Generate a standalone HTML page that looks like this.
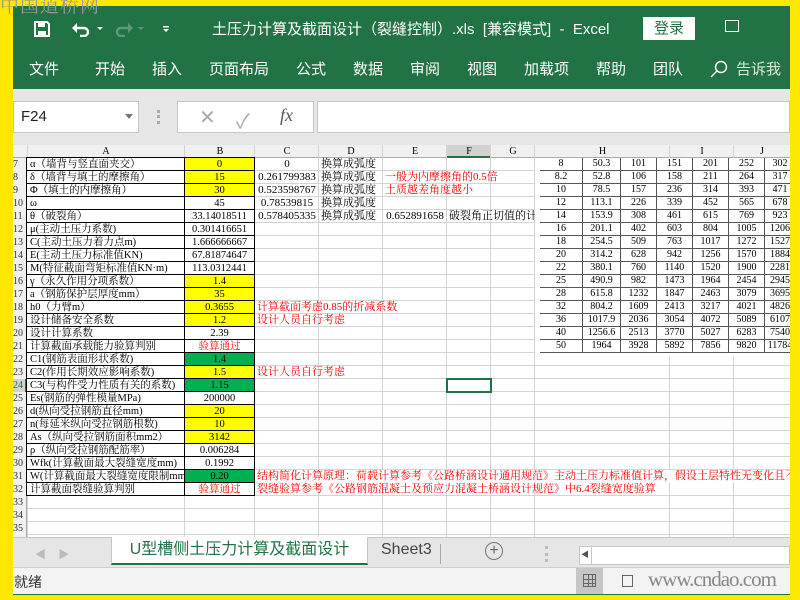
<!DOCTYPE html>
<html><head><meta charset="utf-8"><style>
*{margin:0;padding:0;box-sizing:border-box}
body{width:800px;height:600px;overflow:hidden;background:#ffe800;position:relative;font-family:"Liberation Sans","Noto Sans CJK SC",sans-serif}
.abs{position:absolute}
#app{position:absolute;left:13px;top:6px;width:777px;height:589px;background:#fff;overflow:hidden}
.g{font-family:"Liberation Serif","Noto Serif CJK SC",serif;font-size:11px;line-height:13px;color:#000;white-space:nowrap}
.c{position:absolute;height:13px;overflow:visible}
.ctr{text-align:center}
.bx{border:1px solid #000;margin-left:-1px;margin-top:-1px;height:14px;overflow:hidden}
.y{background:#ffff00}.gr{background:#00b050}.r{color:#ff0000}
</style></head><body>
<div class="abs g" style="left:0;top:-2px;font-size:19px;color:#9a9a9a;letter-spacing:1px;z-index:5;font-family:'Noto Serif CJK SC',serif">中国道桥网</div>
<div id="app">
<div class="abs" style="left:0;top:0;width:777px;height:83px;background:#217346"></div>
<svg class="abs" style="left:21px;top:15px" width="16" height="16" viewBox="0 0 16 16"><path d="M1 1h12l2 2v12H1z" fill="none" stroke="#fff" stroke-width="2"/><rect x="4" y="2" width="7" height="4" fill="#fff"/><rect x="4" y="10" width="8" height="4" fill="#fff"/></svg>
<svg class="abs" style="left:58px;top:15px" width="40" height="16" viewBox="0 0 40 16"><path d="M4 7h9a4 4 0 0 1 0 8H9" fill="none" stroke="#fff" stroke-width="2.4"/><path d="M1 7l5-5v10z" fill="#fff"/><path d="M26 6l3 3 3-3z" fill="#fff"/></svg>
<svg class="abs" style="left:103px;top:15px" width="40" height="16" viewBox="0 0 40 16"><path d="M14 7H5a4 4 0 0 0 0 8h4" fill="none" stroke="#5f9a78" stroke-width="2.4"/><path d="M17 7l-5-5v10z" fill="#5f9a78"/><path d="M22 6l3 3 3-3z" fill="#5f9a78"/></svg>
<svg class="abs" style="left:149px;top:20px" width="8" height="8"><rect x="1" y="0" width="6" height="1.5" fill="#fff"/><path d="M1 3h6l-3 3z" fill="#fff"/></svg>
<div class="abs" style="left:199px;top:12px;color:#fff;font-size:15px;white-space:nowrap">土压力计算及截面设计（裂缝控制）.xls&nbsp;&nbsp;[兼容模式]&nbsp;&nbsp;-&nbsp;&nbsp;Excel</div>
<div class="abs" style="left:630px;top:11px;width:52px;height:23px;background:#fff;color:#217346;font-size:15px;text-align:center;line-height:23px">登录</div>
<div class="abs" style="left:712px;top:14px;width:14px;height:12px;border:1.5px solid #fff"></div>
<div class="abs" style="left:0;top:52px;color:#fff;font-size:15px;white-space:nowrap;width:777px;height:24px">
<span class="abs" style="left:16px">文件</span><span class="abs" style="left:82px">开始</span><span class="abs" style="left:139px">插入</span><span class="abs" style="left:196px">页面布局</span><span class="abs" style="left:283px">公式</span><span class="abs" style="left:340px">数据</span><span class="abs" style="left:397px">审阅</span><span class="abs" style="left:454px">视图</span><span class="abs" style="left:511px">加载项</span><span class="abs" style="left:583px">帮助</span><span class="abs" style="left:640px">团队</span><span class="abs" style="left:723px;color:#d8e8dd">告诉我</span></div>
<svg class="abs" style="left:697px;top:54px" width="18" height="18"><circle cx="11" cy="7" r="5.5" fill="none" stroke="#fff" stroke-width="1.5"/><path d="M7 11l-6 6" stroke="#fff" stroke-width="1.5"/></svg>
<div class="abs" style="left:0;top:83px;width:777px;height:56px;background:#e6e6e6"></div>
<div class="abs" style="left:0;top:95px;width:126px;height:32px;background:#fff;border:1px solid #c6c6c6;font-size:15px;line-height:30px;padding-left:7px;color:#222">F24</div>
<svg class="abs" style="left:112px;top:108px" width="8" height="6"><path d="M0 0h8l-4 5z" fill="#777"/></svg>
<div class="abs" style="left:144px;top:104px;width:3px;height:14px;border-left:3px dotted #aaa"></div>
<div class="abs" style="left:164px;top:95px;width:137px;height:32px;background:#fff;border:1px solid #c6c6c6"></div>
<div class="abs" style="left:186px;top:99px;font-size:20px;color:#aaa">✕</div>
<div class="abs" style="left:223px;top:99px;font-size:20px;color:#aaa">✓</div>
<div class="abs" style="left:267px;top:99px;font-size:18px;color:#555;font-style:italic;font-family:'Liberation Serif',serif">fx</div>
<div class="abs" style="left:304px;top:95px;width:473px;height:32px;background:#fff;border:1px solid #c6c6c6"></div>
<div class="abs" style="left:0;top:139px;width:777px;height:13px;background:#f0f0f0;border-bottom:1px solid #ababab"></div>
<div class="abs g" style="top:139px;left:0;width:777px;height:13px;font-size:10px">
<span class="abs ctr" style="left:14px;width:158px">A</span><span class="abs ctr" style="left:172px;width:70px;color:#000">B</span><span class="abs ctr" style="left:242px;width:64px">C</span><span class="abs ctr" style="left:306px;width:64px">D</span><span class="abs ctr" style="left:370px;width:64px">E</span><span class="abs ctr" style="left:434px;width:44px;background:#d2d2d2;border-bottom:2px solid #217346;height:13px">F</span><span class="abs ctr" style="left:478px;width:44px">G</span><span class="abs ctr" style="left:522px;width:135px">H</span><span class="abs ctr" style="left:657px;width:64px">I</span><span class="abs ctr" style="left:721px;width:56px">J</span></div>
<div class="abs" style="left:14px;top:152px;width:763px;height:379px;background-image:repeating-linear-gradient(to bottom,transparent 0,transparent 12px,#d4d4d4 12px,#d4d4d4 13px)"></div>
<div class="abs" style="left:0;top:152px;width:14px;height:379px;background:#f0f0f0;border-right:1px solid #ababab"></div>
<div class="abs" style="top:139px;left:241px;width:1px;height:392px;background:#d4d4d4"></div>
<div class="abs" style="top:139px;left:305px;width:1px;height:392px;background:#d4d4d4"></div>
<div class="abs" style="top:139px;left:369px;width:1px;height:392px;background:#d4d4d4"></div>
<div class="abs" style="top:139px;left:433px;width:1px;height:392px;background:#d4d4d4"></div>
<div class="abs" style="top:139px;left:477px;width:1px;height:392px;background:#d4d4d4"></div>
<div class="abs" style="top:139px;left:521px;width:1px;height:392px;background:#d4d4d4"></div>
<div class="abs" style="top:139px;left:656px;width:1px;height:392px;background:#d4d4d4"></div>
<div class="abs" style="top:139px;left:720px;width:1px;height:392px;background:#d4d4d4"></div>
<div class="abs" style="top:139px;left:14px;width:1px;height:392px;background:#d4d4d4"></div>
<div class="abs" style="top:139px;left:171px;width:1px;height:392px;background:#d4d4d4"></div>
<div class="abs g" style="left:0;top:152px;width:14px;font-size:10px;line-height:13px;color:#333">
<div>7</div><div>8</div><div>9</div><div>10</div><div>11</div><div>12</div><div>13</div><div>14</div><div>15</div><div>16</div><div>17</div><div>18</div><div>19</div><div>20</div><div>21</div><div>22</div><div>23</div><div style="background:#d2d2d2;color:#217346;border-right:2px solid #217346">24</div><div>25</div><div>26</div><div>27</div><div>28</div><div>29</div><div>30</div><div>31</div><div>32</div><div>33</div><div>34</div><div>35</div></div>
<div class="abs g" style="left:14px;top:152px;font-size:10.5px">
<div style="position:relative;height:13px"><div class="c bx" style="left:0;width:159px;padding-left:3px;background:#fff">α（墙背与竖直面夹交）</div><div class="c bx ctr y" style="left:158px;width:71px">0</div></div>
<div style="position:relative;height:13px"><div class="c bx" style="left:0;width:159px;padding-left:3px;background:#fff">δ（墙背与填土的摩擦角）</div><div class="c bx ctr y" style="left:158px;width:71px">15</div></div>
<div style="position:relative;height:13px"><div class="c bx" style="left:0;width:159px;padding-left:3px;background:#fff">Φ（填土的内摩擦角）</div><div class="c bx ctr y" style="left:158px;width:71px">30</div></div>
<div style="position:relative;height:13px"><div class="c bx" style="left:0;width:159px;padding-left:3px;background:#fff">ω</div><div class="c bx ctr" style="left:158px;width:71px;background:#fff">45</div></div>
<div style="position:relative;height:13px"><div class="c bx" style="left:0;width:159px;padding-left:3px;background:#fff">θ（破裂角）</div><div class="c bx ctr" style="left:158px;width:71px;background:#fff">33.14018511</div></div>
<div style="position:relative;height:13px"><div class="c bx" style="left:0;width:159px;padding-left:3px;background:#fff">μ(主动土压力系数)</div><div class="c bx ctr" style="left:158px;width:71px;background:#fff">0.301416651</div></div>
<div style="position:relative;height:13px"><div class="c bx" style="left:0;width:159px;padding-left:3px;background:#fff">C(主动土压力着力点m)</div><div class="c bx ctr" style="left:158px;width:71px;background:#fff">1.666666667</div></div>
<div style="position:relative;height:13px"><div class="c bx" style="left:0;width:159px;padding-left:3px;background:#fff">E(主动土压力标准值KN)</div><div class="c bx ctr" style="left:158px;width:71px;background:#fff">67.81874647</div></div>
<div style="position:relative;height:13px"><div class="c bx" style="left:0;width:159px;padding-left:3px;background:#fff">M(特征截面弯矩标准值KN·m)</div><div class="c bx ctr" style="left:158px;width:71px;background:#fff">113.0312441</div></div>
<div style="position:relative;height:13px"><div class="c bx" style="left:0;width:159px;padding-left:3px;background:#fff">γ（永久作用分项系数）</div><div class="c bx ctr y" style="left:158px;width:71px">1.4</div></div>
<div style="position:relative;height:13px"><div class="c bx" style="left:0;width:159px;padding-left:3px;background:#fff">a（钢筋保护层厚度mm）</div><div class="c bx ctr y" style="left:158px;width:71px">35</div></div>
<div style="position:relative;height:13px"><div class="c bx" style="left:0;width:159px;padding-left:3px;background:#fff">h0（力臂m）</div><div class="c bx ctr y" style="left:158px;width:71px">0.3655</div></div>
<div style="position:relative;height:13px"><div class="c bx" style="left:0;width:159px;padding-left:3px;background:#fff">设计储备安全系数</div><div class="c bx ctr y" style="left:158px;width:71px">1.2</div></div>
<div style="position:relative;height:13px"><div class="c bx" style="left:0;width:159px;padding-left:3px;background:#fff">设计计算系数</div><div class="c bx ctr" style="left:158px;width:71px;background:#fff">2.39</div></div>
<div style="position:relative;height:13px"><div class="c bx" style="left:0;width:159px;padding-left:3px;background:#fff">计算截面承载能力验算判别</div><div class="c bx ctr r" style="left:158px;width:71px;background:#fff">验算通过</div></div>
<div style="position:relative;height:13px"><div class="c bx" style="left:0;width:159px;padding-left:3px;background:#fff">C1(钢筋表面形状系数)</div><div class="c bx ctr gr" style="left:158px;width:71px">1.4</div></div>
<div style="position:relative;height:13px"><div class="c bx" style="left:0;width:159px;padding-left:3px;background:#fff">C2(作用长期效应影响系数)</div><div class="c bx ctr y" style="left:158px;width:71px">1.5</div></div>
<div style="position:relative;height:13px"><div class="c bx" style="left:0;width:159px;padding-left:3px;background:#fff">C3(与构件受力性质有关的系数)</div><div class="c bx ctr gr" style="left:158px;width:71px">1.15</div></div>
<div style="position:relative;height:13px"><div class="c bx" style="left:0;width:159px;padding-left:3px;background:#fff">Es(钢筋的弹性模量MPa)</div><div class="c bx ctr" style="left:158px;width:71px;background:#fff">200000</div></div>
<div style="position:relative;height:13px"><div class="c bx" style="left:0;width:159px;padding-left:3px;background:#fff">d(纵向受拉钢筋直径mm)</div><div class="c bx ctr y" style="left:158px;width:71px">20</div></div>
<div style="position:relative;height:13px"><div class="c bx" style="left:0;width:159px;padding-left:3px;background:#fff">n(每延米纵向受拉钢筋根数)</div><div class="c bx ctr y" style="left:158px;width:71px">10</div></div>
<div style="position:relative;height:13px"><div class="c bx" style="left:0;width:159px;padding-left:3px;background:#fff">As（纵向受拉钢筋面积mm2）</div><div class="c bx ctr y" style="left:158px;width:71px">3142</div></div>
<div style="position:relative;height:13px"><div class="c bx" style="left:0;width:159px;padding-left:3px;background:#fff">ρ（纵向受拉钢筋配筋率）</div><div class="c bx ctr" style="left:158px;width:71px;background:#fff">0.006284</div></div>
<div style="position:relative;height:13px"><div class="c bx" style="left:0;width:159px;padding-left:3px;background:#fff">Wfk(计算截面最大裂缝宽度mm)</div><div class="c bx ctr" style="left:158px;width:71px;background:#fff">0.1992</div></div>
<div style="position:relative;height:13px"><div class="c bx" style="left:0;width:159px;padding-left:3px;background:#fff">W(计算截面最大裂缝宽度限制mm)</div><div class="c bx ctr gr" style="left:158px;width:71px">0.20</div></div>
<div style="position:relative;height:13px"><div class="c bx" style="left:0;width:159px;padding-left:3px;background:#fff">计算截面裂缝验算判别</div><div class="c bx ctr r" style="left:158px;width:71px;background:#fff">验算通过</div></div>
</div>
<div class="abs g" style="left:0;top:152px;width:777px;height:340px">
<div class="c ctr" style="left:242px;top:0;width:64px">0</div><div class="c" style="left:308px;top:0">换算成弧度</div>
<div class="c ctr" style="left:242px;top:13px;width:64px">0.261799383</div><div class="c" style="left:308px;top:13px">换算成弧度</div><div class="c r" style="left:372px;top:13px">一般为内摩擦角的0.5倍</div>
<div class="c ctr" style="left:242px;top:26px;width:64px">0.523598767</div><div class="c" style="left:308px;top:26px">换算成弧度</div><div class="c r" style="left:372px;top:26px">土质越差角度越小</div>
<div class="c ctr" style="left:242px;top:39px;width:64px">0.78539815</div><div class="c" style="left:308px;top:39px">换算成弧度</div>
<div class="c ctr" style="left:242px;top:52px;width:64px">0.578405335</div><div class="c" style="left:308px;top:52px">换算成弧度</div><div class="c ctr" style="left:370px;top:52px;width:64px">0.652891658</div><div class="c" style="left:436px;top:52px">破裂角正切值的计算</div>
<div class="c r" style="left:244px;top:143px">计算截面考虑0.85的折减系数</div>
<div class="c r" style="left:244px;top:156px">设计人员自行考虑</div>
<div class="c r" style="left:244px;top:208px">设计人员自行考虑</div>
<div class="c r" style="left:244px;top:312px;background:#fff;width:533px;overflow:hidden">结构简化计算原理：荷载计算参考《公路桥涵设计通用规范》主动土压力标准值计算，假设土层特性无变化且不考虑水位影响</div>
<div class="c r" style="left:244px;top:325px">裂缝验算参考《公路钢筋混凝土及预应力混凝土桥涵设计规范》中6.4裂缝宽度验算</div>
</div>
<div class="abs" style="left:433px;top:372px;width:46px;height:15px;border:2px solid #217346"></div>
<div class="abs" style="left:522px;top:152px;width:255px;height:199px;background:#fff"></div>
<div class="abs g" style="left:527px;top:152px;font-size:10px" id="rt">
<style>#rt div{display:flex;height:13px;border-bottom:1px solid #555}#rt span{display:block;text-align:center;border-right:1px solid #555;height:12px;line-height:12px}#rt span:nth-child(1){width:43px}#rt span:nth-child(2){width:38px}#rt span:nth-child(3),#rt span:nth-child(4),#rt span:nth-child(5),#rt span:nth-child(6){width:36px}#rt span:nth-child(7){width:30px;overflow:hidden;border-right:0}</style>
<div><span>8</span><span>50.3</span><span>101</span><span>151</span><span>201</span><span>252</span><span>302</span></div>
<div><span>8.2</span><span>52.8</span><span>106</span><span>158</span><span>211</span><span>264</span><span>317</span></div>
<div><span>10</span><span>78.5</span><span>157</span><span>236</span><span>314</span><span>393</span><span>471</span></div>
<div><span>12</span><span>113.1</span><span>226</span><span>339</span><span>452</span><span>565</span><span>678</span></div>
<div><span>14</span><span>153.9</span><span>308</span><span>461</span><span>615</span><span>769</span><span>923</span></div>
<div><span>16</span><span>201.1</span><span>402</span><span>603</span><span>804</span><span>1005</span><span>1206</span></div>
<div><span>18</span><span>254.5</span><span>509</span><span>763</span><span>1017</span><span>1272</span><span>1527</span></div>
<div><span>20</span><span>314.2</span><span>628</span><span>942</span><span>1256</span><span>1570</span><span>1884</span></div>
<div><span>22</span><span>380.1</span><span>760</span><span>1140</span><span>1520</span><span>1900</span><span>2281</span></div>
<div><span>25</span><span>490.9</span><span>982</span><span>1473</span><span>1964</span><span>2454</span><span>2945</span></div>
<div><span>28</span><span>615.8</span><span>1232</span><span>1847</span><span>2463</span><span>3079</span><span>3695</span></div>
<div><span>32</span><span>804.2</span><span>1609</span><span>2413</span><span>3217</span><span>4021</span><span>4826</span></div>
<div><span>36</span><span>1017.9</span><span>2036</span><span>3054</span><span>4072</span><span>5089</span><span>6107</span></div>
<div><span>40</span><span>1256.6</span><span>2513</span><span>3770</span><span>5027</span><span>6283</span><span>7540</span></div>
<div><span>50</span><span>1964</span><span>3928</span><span>5892</span><span>7856</span><span>9820</span><span>11784</span></div>
</div>
<div class="abs" style="left:0;top:531px;width:777px;height:30px;background:#e6e6e6;border-top:1px solid #c6c6c6"></div>
<div class="abs" style="left:22px;top:540px;color:#bbb;font-size:11px">◀&nbsp;&nbsp;&nbsp;&nbsp;▶</div>
<div class="abs" style="left:98px;top:531px;width:257px;height:28px;background:#fff;border-bottom:2px solid #217346;color:#217346;font-size:16px;text-align:center;line-height:26px;border-left:1px solid #c6c6c6;border-right:1px solid #c6c6c6;white-space:nowrap">U型槽侧土压力计算及截面设计</div>
<div class="abs" style="left:368px;top:535px;font-size:16px;color:#444">Sheet3</div>
<div class="abs" style="left:427px;top:538px;width:1px;height:20px;background:#aaa"></div>
<div class="abs" style="left:472px;top:536px;width:18px;height:18px;border:1.5px solid #777;border-radius:50%;text-align:center;line-height:15px;color:#666;font-size:16px">+</div>
<div class="abs" style="left:532px;top:540px;width:3px;height:16px;border-left:3px dotted #bbb"></div>
<div class="abs" style="left:566px;top:540px;width:211px;height:19px;background:#fff;border:1px solid #c6c6c6"></div>
<div class="abs" style="left:566px;top:540px;width:13px;height:19px;border-right:1px solid #c6c6c6;font-size:8px;color:#555;text-align:center;line-height:18px">◀</div>
<div class="abs" style="left:0;top:561px;width:777px;height:28px;background:#f3f3f3;border-top:1px solid #d0d0d0"></div>
<div class="abs" style="left:1px;top:566px;font-size:14px;color:#333">就绪</div>
<div class="abs" style="left:563px;top:562px;width:27px;height:27px;background:#c6c6c6"></div>
<div class="abs" style="left:570px;top:568px;width:13px;height:13px;border:1px solid #666;background:linear-gradient(#666,#666) 4px 0/1px 100% no-repeat,linear-gradient(#666,#666) 8px 0/1px 100% no-repeat,linear-gradient(#666,#666) 0 4px/100% 1px no-repeat,linear-gradient(#666,#666) 0 8px/100% 1px no-repeat"></div>
<div class="abs" style="left:609px;top:569px;width:11px;height:12px;border:1px solid #666"></div>
<div class="abs" style="left:635px;top:561px;font-family:'Liberation Serif',serif;font-size:21px;color:#888;letter-spacing:-1px">www.cndao.com</div>
<div class="abs" style="left:0;top:588px;width:777px;height:2px;background:#217346"></div>
</div>
</body></html>
